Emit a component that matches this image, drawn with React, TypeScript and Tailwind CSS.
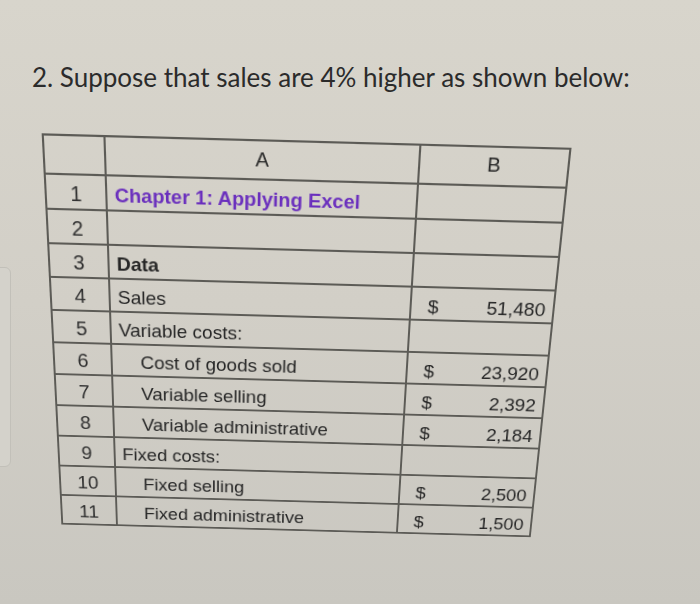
import React from 'react';

type Row = {
  n: number;
  label: string;
  value?: string;
  bold?: boolean;
  title?: boolean;
  indent?: boolean;
};

const rows: Row[] = [
  { n: 1, label: 'Chapter 1: Applying Excel', title: true },
  { n: 2, label: '' },
  { n: 3, label: 'Data', bold: true },
  { n: 4, label: 'Sales', value: '51,480' },
  { n: 5, label: 'Variable costs:' },
  { n: 6, label: 'Cost of goods sold', indent: true, value: '23,920' },
  { n: 7, label: 'Variable selling', indent: true, value: '2,392' },
  { n: 8, label: 'Variable administrative', indent: true, value: '2,184' },
  { n: 9, label: 'Fixed costs:' },
  { n: 10, label: 'Fixed selling', indent: true, value: '2,500' },
  { n: 11, label: 'Fixed administrative', indent: true, value: '1,500' },
];

const cell = 'border-r-2 border-b-2 border-[#5c5b56] flex items-center';

const Sheet: React.FC = () => (
  <div className="ml-[52px] mt-[57px] w-fit origin-center [transform:rotate(1.55deg)_perspective(800px)_rotateX(-14deg)]">
    <div className="grid grid-cols-[58px_297px_141px] grid-rows-[36px_repeat(11,33px)] border-l-2 border-t-2 border-[#5c5b56] text-[19px] text-[#262626]">
      {/* column headers */}
      <div className={cell} />
      <div className={`${cell} items-end justify-center pb-[3px]`}>A</div>
      <div className={`${cell} items-end justify-center pb-[4px]`}>B</div>

      {rows.map((r) => (
        <React.Fragment key={r.n}>
          <div className={`${cell} justify-center pt-[3px] text-[20px] text-[#303030]`}>{r.n}</div>
          <div
            className={`${cell} pt-[5px] ${r.indent ? 'pl-[28px]' : 'pl-[7px]'} ${
              r.title ? 'font-bold text-[#6a2fbd]' : r.bold ? 'font-bold' : ''
            } whitespace-nowrap`}
          >
            {r.label}
          </div>
          <div className={`${cell} justify-between pt-[8px] pl-[16px] pr-[7px]`}>
            {r.value && (
              <>
                <span>$</span>
                <span>{r.value}</span>
              </>
            )}
          </div>
        </React.Fragment>
      ))}
    </div>
  </div>
);

export default function App() {
  return (
    <div className="relative w-[700px] h-[604px] overflow-hidden bg-gradient-to-b from-[#d8d5cc] via-[#d2cfc7] to-[#c9c7c0] font-['Liberation_Sans',Arial,sans-serif]">
      {/* faint reflection of a panel on the left edge of the screen */}
      <div className="absolute left-[-10px] top-[267px] w-[21px] h-[200px] rounded-r-md border border-[#c2c0b9] bg-[#d4d2cb]" />

      <h1 className="pl-[32px] pt-[64px] text-[26px] leading-none font-['Lato','Liberation_Sans',sans-serif] text-[#2b2b2b]">
        2. Suppose that sales are 4% higher as shown below:
      </h1>

      <Sheet />
    </div>
  );
}
